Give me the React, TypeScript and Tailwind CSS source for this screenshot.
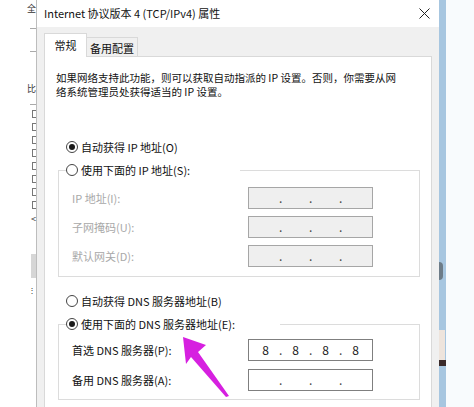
import { Fragment } from "react";

function Radio({ checked }: { checked?: boolean }) {
  return (
    <span className="flex h-[12px] w-[12px] shrink-0 items-center justify-center rounded-full border border-[#444] bg-white">
      {checked && <span className="h-[6px] w-[6px] rounded-full bg-[#1a1a1a]" />}
    </span>
  );
}

function RadioLabel({ checked, children }: { checked?: boolean; children: React.ReactNode }) {
  return (
    <div className="flex h-[18px] items-center gap-[3px] text-[11px] leading-[18px] text-[#111]">
      <Radio checked={checked} />
      <span>{children}</span>
    </div>
  );
}

function IpBox({ values, disabled }: { values?: string[]; disabled?: boolean }) {
  const segs = values ?? ["", "", "", ""];
  return (
    <div
      className={
        "flex h-[22px] w-[125px] items-center border pl-[3px] text-[12px] leading-[20px] " +
        (disabled ? "border-[#a6a6a6] bg-[#efefef]" : "border-[#7f7f7f] bg-white")
      }
    >
      {segs.map((s, i) => (
        <Fragment key={i}>
          {i > 0 && <span className="w-[3px] text-center text-[#444]">.</span>}
          <span className="w-[27px] text-center text-[#1a1a1a]">{s}</span>
        </Fragment>
      ))}
    </div>
  );
}

function Field({ label, disabled, values }: { label: string; disabled?: boolean; values?: string[] }) {
  return (
    <div className="ml-[6px] flex h-[22px] items-center">
      <span className={"w-[176px] text-[11px] " + (disabled ? "text-[#a8a8a8]" : "text-[#111]")}>{label}</span>
      <IpBox values={values} disabled={disabled} />
    </div>
  );
}

export default function App() {
  return (
    <div className="relative flex h-[407px] w-[474px] overflow-hidden bg-white font-['Noto_Sans_CJK_SC',sans-serif]">
      {/* window behind the dialog */}
      <div className="flex w-[37px] shrink-0 flex-col items-end border-r border-[#bdbdbd] bg-white text-[9px] leading-[11px] text-[#333]">
        <span className="mt-[3px]">全</span>
        <span className="mt-[14px] h-px w-[6px] bg-[#aaa]" />
        <span className="mt-[22px] h-px w-[6px] bg-[#aaa]" />
        <span className="mt-[31px]">比</span>
        <span className="mt-[10px] h-px w-[6px] bg-[#aaa]" />
        {[0, 1, 2, 3, 4, 5, 6, 7].map((i) => (
          <span key={i} className="mt-[5px] h-[8px] w-[4px] border border-r-0 border-[#777]" />
        ))}
        <span className="mt-[4px]">&lt;</span>
        <span className="mt-[30px] h-[24px] w-[5px] bg-[#d6d6d6]" />
        <span className="mt-[6px] text-[8px]">⋮</span>
      </div>

      {/* dialog */}
      <div className="flex w-[402px] shrink-0 flex-col bg-[#f0f0f0]">
        <div className="flex h-[27px] items-center justify-between bg-white pl-[7px] pr-[9px] text-[11px] text-[#111]">
          <span>Internet 协议版本 4 (TCP/IPv4) 属性</span>
          <svg width="11" height="11" viewBox="0 0 11 11" className="text-[#222]">
            <path d="M0.5 0.5 L10.5 10.5 M10.5 0.5 L0.5 10.5" stroke="currentColor" strokeWidth="1" />
          </svg>
        </div>

        <div className="flex h-[29px] items-end pl-[7px] text-[11px] text-[#111]">
          <div className="relative z-10 mb-[-1px] flex h-[24px] w-[43px] items-center justify-center border border-b-0 border-[#d9d9d9] bg-white">
            常规
          </div>
          <div className="flex h-[19px] w-[51px] items-center justify-center border border-b-0 border-l-0 border-[#d9d9d9] bg-[#f0f0f0] pt-[2px]">
            备用配置
          </div>
        </div>

        <div className="ml-[7px] flex w-[388px] flex-1 flex-col border border-b-0 border-[#d9d9d9] bg-white">
          <p className="ml-[11px] mt-[14px] text-[10.5px] leading-[14px] text-[#111]">
            如果网络支持此功能，则可以获取自动指派的 IP 设置。否则，你需要从网
            <br />
            络系统管理员处获得适当的 IP 设置。
          </p>

          <div className="ml-[21px] mt-[39px]">
            <RadioLabel checked>自动获得 IP 地址(O)</RadioLabel>
          </div>

          <fieldset className="ml-[13px] mt-[5px] w-[362px] border border-[#dcdcdc] pb-[9px] pl-[7px] pt-[8px]">
            <legend className="w-[174px] p-0">
              <RadioLabel>使用下面的 IP 地址(S):</RadioLabel>
            </legend>
            <div className="flex flex-col gap-[7px]">
              <Field label="IP 地址(I):" disabled />
              <Field label="子网掩码(U):" disabled />
              <Field label="默认网关(D):" disabled />
            </div>
          </fieldset>

          <div className="ml-[21px] mt-[15px]">
            <RadioLabel>自动获得 DNS 服务器地址(B)</RadioLabel>
          </div>

          <fieldset className="ml-[13px] mt-[5px] w-[362px] border border-[#dcdcdc] pb-[8px] pl-[7px] pt-[6px]">
            <legend className="w-[214px] p-0">
              <RadioLabel checked>使用下面的 DNS 服务器地址(E):</RadioLabel>
            </legend>
            <div className="flex flex-col gap-[8px]">
              <Field label="首选 DNS 服务器(P):" values={["8", "8", "8", "8"]} />
              <Field label="备用 DNS 服务器(A):" />
            </div>
          </fieldset>
        </div>
      </div>

      {/* desktop edge */}
      <div className="flex w-[7px] shrink-0 flex-col bg-[#a7c6e0]">
        <span className="mt-[262px] h-[18px] w-[4px] rounded-r-full bg-[#6d7c88]" />
        <span className="mt-[50px] h-[30px] w-[6px] bg-[#eee4dc]" />
        <span className="h-[6px] w-[7px] bg-[#3a2a2a]" />
      </div>
      <div className="flex-1 bg-[#f8fbfd]" />

      {/* annotation arrow */}
      <svg className="pointer-events-none absolute left-0 top-0" width="474" height="407" viewBox="0 0 474 407">
        <polygon
          points="183,337 206,345 198,352 229,396 226,397 191,357 186,364"
          fill="#d620e0"
        />
      </svg>
    </div>
  );
}
